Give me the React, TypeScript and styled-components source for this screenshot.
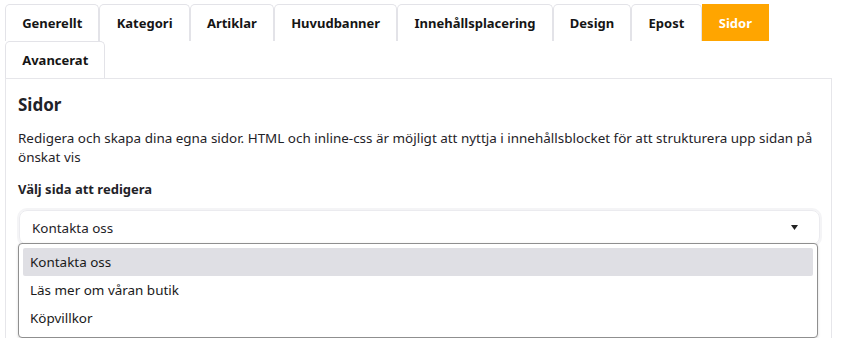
import React from "react";
import styled, { createGlobalStyle } from "styled-components";

const Global = createGlobalStyle`
  html, body { margin: 0; padding: 0; background: #fff; }
  body { font-family: "Noto Sans", "Open Sans", sans-serif; color: #1f2328; }
  * { box-sizing: border-box; }
`;

const Page = styled.div`
  padding: 4px 14px 0 5px;
  height: 338px;
  overflow: hidden;
`;

const TabBar = styled.div`
  display: flex;
  flex-wrap: wrap;
  width: 770px;
`;

const Tab = styled.div<{ $active?: boolean }>`
  height: 37px;
  display: flex;
  align-items: center;
  padding: 0 16.2px;
  font-size: 13px;
  font-weight: 700;
  color: ${(p) => (p.$active ? "#fff" : "#151515")};
  background: ${(p) => (p.$active ? "#ffa500" : "#fff")};
  border: 1px solid ${(p) => (p.$active ? "#ffa500" : "#e3e3e8")};
  border-bottom: none;
  border-radius: ${(p) => (p.$active ? "0" : "5px 5px 0 0")};
  white-space: nowrap;
`;

const Panel = styled.div`
  border: 1px solid #e6e6ea;
  border-bottom: none;
  width: 827px;
  padding: 14px 12px 0 12px;
  height: 260px;
`;

const Heading = styled.h2`
  margin: 0 0 12px 0;
  font-size: 17px;
  font-weight: 700;
  color: #1f2328;
  line-height: 24px;
`;

const Text = styled.p`
  margin: 0 0 13px 0;
  font-size: 13.45px;
  line-height: 19px;
  color: #1f2328;
`;

const Label = styled.div`
  font-size: 13px;
  font-weight: 700;
  line-height: 19px;
  margin-bottom: 11px;
  color: #1f2328;
`;

const SelectWrap = styled.div`
  position: relative;
`;

const SelectBox = styled.div`
  height: 35px;
  border: 1px solid #ebebef;
  box-shadow: 0 0 0 2px #f4f4f6;
  border-radius: 8px;
  margin: 0 -1px 0 1px;
  display: flex;
  align-items: center;
  justify-content: space-between;
  padding: 0 21px 0 12px;
  font-size: 13.45px;
  color: #1f2328;
`;

const Caret = styled.svg`
  width: 7px;
  height: 5px;
`;

const Menu = styled.div`
  position: absolute;
  left: 0;
  top: 33px;
  width: 800px;
  background: #fff;
  border: 1px solid #8f8f8f;
  border-radius: 4px;
  box-shadow: 0 1px 3px rgba(0, 0, 0, 0.15);
  padding: 4px 4px 5px 4px;
  z-index: 2;
`;

const Option = styled.div<{ $selected?: boolean }>`
  height: 28px;
  display: flex;
  align-items: center;
  padding: 0 7px;
  font-size: 13.45px;
  color: #1a1a1a;
  background: ${(p) => (p.$selected ? "#dfdfe4" : "transparent")};
  border-radius: 2px;
`;

const Behind = styled.div`
  margin-top: 20px;
  padding-left: 33px;
  font-size: 20px;
  font-weight: 700;
  color: #1f2328;
`;

const tabs = [
  "Generellt",
  "Kategori",
  "Artiklar",
  "Huvudbanner",
  "Innehållsplacering",
  "Design",
  "Epost",
  "Sidor",
  "Avancerat",
];

export default function App() {
  return (
    <>
      <Global />
      <Page>
        <TabBar>
          {tabs.map((t) => (
            <Tab key={t} $active={t === "Sidor"}>
              {t}
            </Tab>
          ))}
        </TabBar>
        <Panel>
          <Heading>Sidor</Heading>
          <Text>
            Redigera och skapa dina egna sidor. HTML och inline-css är möjligt att nyttja i
            innehållsblocket för att strukturera upp sidan på önskat vis
          </Text>
          <Label>Välj sida att redigera</Label>
          <SelectWrap>
            <SelectBox>
              <span>Kontakta oss</span>
              <Caret viewBox="0 0 7 5">
                <path d="M0 0 H7 L3.5 5 Z" fill="#222" />
              </Caret>
            </SelectBox>
            <Menu>
              <Option $selected>Kontakta oss</Option>
              <Option>Läs mer om våran butik</Option>
              <Option>Köpvillkor</Option>
            </Menu>
          </SelectWrap>
          <Behind>Innehåll</Behind>
        </Panel>
      </Page>
    </>
  );
}
